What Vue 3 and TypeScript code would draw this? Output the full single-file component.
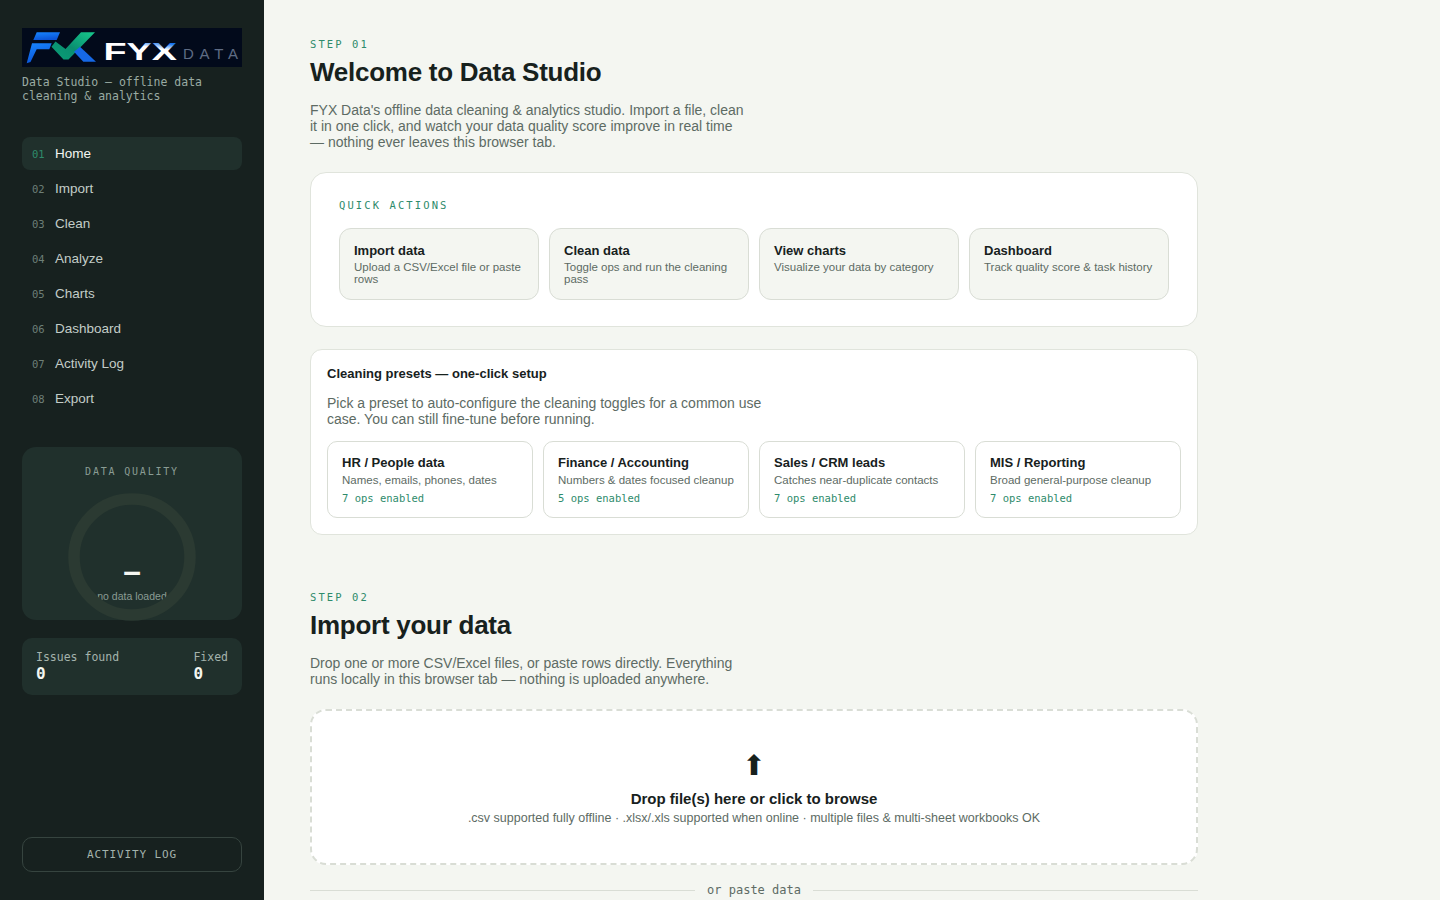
<script setup lang="ts">
interface NavItem { num: string; label: string }
interface Tile { title: string; desc: string }
interface Preset extends Tile { ops: number }

const nav: NavItem[] = [
  { num: '01', label: 'Home' },
  { num: '02', label: 'Import' },
  { num: '03', label: 'Clean' },
  { num: '04', label: 'Analyze' },
  { num: '05', label: 'Charts' },
  { num: '06', label: 'Dashboard' },
  { num: '07', label: 'Activity Log' },
  { num: '08', label: 'Export' },
]
const actions: Tile[] = [
  { title: 'Import data', desc: 'Upload a CSV/Excel file or paste rows' },
  { title: 'Clean data', desc: 'Toggle ops and run the cleaning pass' },
  { title: 'View charts', desc: 'Visualize your data by category' },
  { title: 'Dashboard', desc: 'Track quality score & task history' },
]
const presets: Preset[] = [
  { title: 'HR / People data', desc: 'Names, emails, phones, dates', ops: 7 },
  { title: 'Finance / Accounting', desc: 'Numbers & dates focused cleanup', ops: 5 },
  { title: 'Sales / CRM leads', desc: 'Catches near-duplicate contacts', ops: 7 },
  { title: 'MIS / Reporting', desc: 'Broad general-purpose cleanup', ops: 7 },
]
</script>

<template>
  <div class="app">
    <aside class="sidebar">
      <svg class="logo" width="220" height="39" viewBox="0 0 220 39" role="img" aria-label="FYX Data">
        <defs>
          <linearGradient id="fblue" x1="0" y1="0" x2="0.3" y2="1">
            <stop offset="0" stop-color="#1785ff" />
            <stop offset="1" stop-color="#0b55d8" />
          </linearGradient>
          <linearGradient id="check" x1="0" y1="1" x2="1" y2="0">
            <stop offset="0" stop-color="#0a9d77" />
            <stop offset="0.45" stop-color="#0a8f70" />
            <stop offset="1" stop-color="#17c98c" />
          </linearGradient>
          <linearGradient id="xfill" x1="0.66" y1="0.9" x2="1" y2="0.05">
            <stop offset="0.55" stop-color="#ffffff" />
            <stop offset="0.8" stop-color="#1572ee" />
          </linearGradient>
        </defs>
        <rect width="220" height="39" fill="#020a1b" />
        <polygon points="14.7,4.3 38,4.3 34.7,12 11.3,12" fill="url(#fblue)" />
        <polygon points="10,15.3 29.7,15.3 27.3,21.3 14.7,21.3 8.5,34 4.7,35.3" fill="url(#fblue)" />
        <polygon points="33.5,13.5 29.5,18.7 41.5,31.5 46.5,31.5 73,4.3 59,4.3 43.5,21" fill="url(#check)" />
        <polygon points="58,18.7 74,33.7 61.3,33.7 52,23.7" fill="#1668e6" />
        <text class="logo-fyx" x="81.5" y="32" textLength="73.5" lengthAdjust="spacingAndGlyphs" fill="url(#xfill)">FYX</text>
        <text class="logo-data" x="161" y="30.5" textLength="55" lengthAdjust="spacing" fill="#5f6c84">DATA</text>
      </svg>
      <p class="tagline">Data Studio — offline data cleaning &amp; analytics</p>

      <nav class="nav">
        <a v-for="(item, i) in nav" :key="item.num" class="nav-item" :class="{ active: i === 0 }">
          <span class="nav-num">{{ item.num }}</span>
          <span class="nav-label">{{ item.label }}</span>
        </a>
      </nav>

      <section class="quality">
        <div class="quality-title">DATA QUALITY</div>
        <div class="gauge">
          <div class="gauge-text">
            <div class="gauge-value">—</div>
            <div class="gauge-note">no data loaded</div>
          </div>
          <svg class="gauge-ring" width="128" height="128" viewBox="0 0 128 128">
            <circle cx="64" cy="64" r="58" fill="none" stroke="#2b3a32" stroke-width="11.5" />
          </svg>
        </div>
      </section>

      <section class="stats">
        <div>
          <div class="stat-label">Issues found</div>
          <div class="stat-value">0</div>
        </div>
        <div>
          <div class="stat-label">Fixed</div>
          <div class="stat-value">0</div>
        </div>
      </section>

      <button class="log-btn" type="button">ACTIVITY LOG</button>
    </aside>

    <main class="main">
      <section class="step">
        <div class="eyebrow">STEP 01</div>
        <h1 class="heading">Welcome to Data Studio</h1>
        <p class="lede">FYX Data's offline data cleaning &amp; analytics studio. Import a file, clean it in one click, and watch your data quality score improve in real time — nothing ever leaves this browser tab.</p>

        <div class="panel actions-panel">
          <div class="panel-eyebrow">QUICK ACTIONS</div>
          <div class="action-grid">
            <div v-for="a in actions" :key="a.title" class="action">
              <div class="tile-title">{{ a.title }}</div>
              <div class="tile-desc">{{ a.desc }}</div>
            </div>
          </div>
        </div>

        <div class="panel presets-panel">
          <div class="presets-title">Cleaning presets — one-click setup</div>
          <p class="presets-desc">Pick a preset to auto-configure the cleaning toggles for a common use case. You can still fine-tune before running.</p>
          <div class="preset-grid">
            <div v-for="p in presets" :key="p.title" class="preset">
              <div class="tile-title">{{ p.title }}</div>
              <div class="preset-desc">{{ p.desc }}</div>
              <div class="preset-ops">{{ p.ops }} ops enabled</div>
            </div>
          </div>
        </div>
      </section>

      <section class="step step-two">
        <div class="eyebrow">STEP 02</div>
        <h1 class="heading">Import your data</h1>
        <p class="lede">Drop one or more CSV/Excel files, or paste rows directly. Everything runs locally in this browser tab — nothing is uploaded anywhere.</p>

        <div class="dropzone">
          <div class="drop-icon">⬆</div>
          <div class="drop-title">Drop file(s) here or click to browse</div>
          <div class="drop-sub">.csv supported fully offline · .xlsx/.xls supported when online · multiple files &amp; multi-sheet workbooks OK</div>
        </div>

        <div class="divider"><span>or paste data</span></div>
      </section>
    </main>
  </div>
</template>

<style>
html, body { background: #f4f6f1; overflow: hidden; }
</style>

<style scoped>
.app {
  display: flex;
  height: 100vh;
  overflow: hidden;
  background: #f4f6f1;
  color: #17211d;
  font-family: "Liberation Sans", Arial, sans-serif;
}
.sidebar {
  width: 264px;
  flex: none;
  box-sizing: border-box;
  padding: 28px 22px 28px;
  background: #17211f;
  display: flex;
  flex-direction: column;
}
.logo { display: block; flex: none; }
.logo-fyx { font: 700 24px "Liberation Sans", Arial, sans-serif; }
.logo-data { font: 400 15px "Liberation Sans", Arial, sans-serif; }
.tagline {
  margin: 8px 0 0;
  font: 11.5px/14px "DejaVu Sans Mono", monospace;
  color: #9aaba3;
}
.nav {
  margin-top: 34px;
  display: flex;
  flex-direction: column;
  gap: 2px;
}
.nav-item {
  height: 33px;
  box-sizing: border-box;
  padding: 0 10px;
  border-radius: 8px;
  display: flex;
  align-items: center;
  gap: 9px;
  font-size: 13.5px;
  color: #c3cdc8;
}
.nav-item.active { background: #20302c; color: #f4f6f1; }
.nav-num {
  font: 10.5px "DejaVu Sans Mono", monospace;
  width: 14px;
  color: #6d7f77;
}
.active .nav-num { color: #2e8b6b; }
.quality {
  margin-top: 32px;
  height: 173px;
  flex: none;
  box-sizing: border-box;
  padding-top: 19px;
  background: #20302c;
  border-radius: 14px;
  display: flex;
  flex-direction: column;
  align-items: center;
}
.quality-title {
  font: 10px/12px "DejaVu Sans Mono", monospace;
  letter-spacing: 0.18em;
  color: #8a9c94;
}
.gauge {
  position: relative;
  width: 128px;
  height: 128px;
  margin-top: 15px;
}
.gauge-ring { position: absolute; inset: 0; }
.gauge-text {
  position: absolute;
  left: 0;
  right: 0;
  top: 62px;
  text-align: center;
}
.gauge-value {
  font: 700 26px/34px "DejaVu Sans Mono", monospace;
  color: #f4f6f1;
}
.gauge-note {
  margin-top: 1px;
  font-size: 10.5px;
  line-height: 12px;
  color: #8a9c94;
  white-space: nowrap;
}
.stats {
  margin-top: 18px;
  height: 57px;
  flex: none;
  box-sizing: border-box;
  padding: 13px 14px 11px;
  background: #20302c;
  border-radius: 10px;
  display: flex;
  justify-content: space-between;
}
.stat-label {
  font: 11.5px/13px "DejaVu Sans Mono", monospace;
  color: #a4b3ac;
}
.stat-value {
  margin-top: 2px;
  font: 700 16px/16px "DejaVu Sans Mono", monospace;
  color: #f4f6f1;
}
.log-btn {
  margin-top: auto;
  height: 35px;
  flex: none;
  padding: 0;
  background: transparent;
  border: 1px solid #36443f;
  border-radius: 10px;
  font: 11px "DejaVu Sans Mono", monospace;
  letter-spacing: 0.08em;
  color: #a4b3ac;
}
.main {
  flex: 1;
  min-width: 0;
  padding: 38px 0 0 46px;
}
.step { width: 888px; }
.step-two { margin-top: 56px; }
.eyebrow {
  font: 10.5px/13px "DejaVu Sans Mono", monospace;
  letter-spacing: 0.2em;
  color: #2e8b6b;
}
.heading {
  margin: 6px 0 0;
  font-size: 26px;
  line-height: 30px;
  font-weight: 700;
  letter-spacing: -0.01em;
  color: #17211d;
}
.lede {
  margin: 15px 0 0;
  max-width: 440px;
  font-size: 14px;
  line-height: 16px;
  color: #5d6b64;
}
.panel {
  background: #fff;
  border: 1px solid #e0e4dc;
}
.actions-panel {
  margin-top: 22px;
  padding: 26px 28px 26px;
  border-radius: 16px;
}
.panel-eyebrow {
  font: 10.5px/13px "DejaVu Sans Mono", monospace;
  letter-spacing: 0.2em;
  color: #2e8b6b;
}
.action-grid {
  margin-top: 16px;
  display: grid;
  grid-template-columns: repeat(4, 1fr);
  gap: 10px;
}
.action {
  height: 72px;
  box-sizing: border-box;
  padding: 14px 14px;
  background: #f4f6f1;
  border: 1px solid #d9ddd5;
  border-radius: 12px;
}
.tile-title {
  font-size: 13px;
  line-height: 15px;
  font-weight: 700;
  color: #17211d;
}
.tile-desc {
  margin-top: 3px;
  font-size: 11.5px;
  line-height: 12px;
  color: #5d6b64;
}
.presets-panel {
  margin-top: 22px;
  padding: 16px;
  border-radius: 12px;
}
.presets-title {
  font-size: 13px;
  line-height: 15px;
  font-weight: 700;
}
.presets-desc {
  margin: 14px 0 0;
  max-width: 440px;
  font-size: 14px;
  line-height: 16px;
  color: #5d6b64;
}
.preset-grid {
  margin-top: 14px;
  display: grid;
  grid-template-columns: repeat(4, 1fr);
  gap: 10px;
}
.preset {
  height: 77px;
  box-sizing: border-box;
  padding: 13px 14px;
  background: #fff;
  border: 1px solid #d9ddd5;
  border-radius: 10px;
}
.preset-desc {
  margin-top: 3px;
  font-size: 11.5px;
  line-height: 14px;
  color: #5d6b64;
}
.preset-ops {
  margin-top: 5px;
  font: 10.5px/13px "DejaVu Sans Mono", monospace;
  color: #2e8b6b;
}
.dropzone {
  margin-top: 22px;
  height: 156px;
  box-sizing: border-box;
  padding-top: 38px;
  background: #fff;
  border: 2px dashed #d9ddd5;
  border-radius: 16px;
  text-align: center;
}
.drop-icon {
  font: 28px/34px "DejaVu Sans", sans-serif;
  color: #17211d;
}
.drop-title {
  margin-top: 7px;
  font-size: 15px;
  line-height: 18px;
  font-weight: 700;
}
.drop-sub {
  margin-top: 3px;
  font-size: 12.5px;
  line-height: 15px;
  color: #5d6b64;
}
.divider {
  margin-top: 17px;
  display: flex;
  align-items: center;
  gap: 12px;
  font: 12px/16px "DejaVu Sans Mono", monospace;
  color: #5d6b64;
}
.divider::before, .divider::after {
  content: "";
  flex: 1;
  height: 1px;
  background: #d9ddd5;
}
</style>
